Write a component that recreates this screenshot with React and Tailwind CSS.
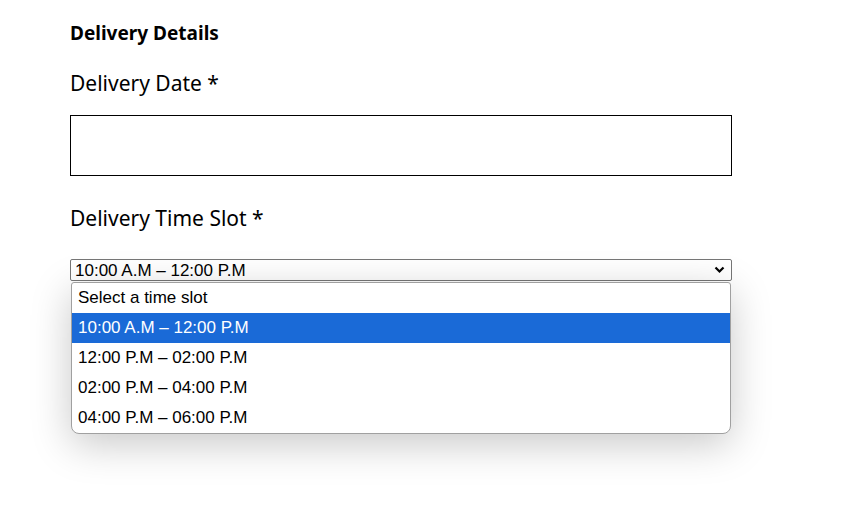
import React from 'react';

const slots = [
  'Select a time slot',
  '10:00 A.M – 12:00 P.M',
  '12:00 P.M – 02:00 P.M',
  '02:00 P.M – 04:00 P.M',
  '04:00 P.M – 06:00 P.M',
];

const App = () => {
  const selected = 1;
  return (
    <div className="min-h-[511px] bg-white pl-[70px] pt-[22px] text-black" style={{ fontFamily: '"Noto Sans", "Open Sans", sans-serif' }}>
      <div className="w-[662px]">
        <h3 className="text-[19px] font-bold leading-[22px]">Delivery Details</h3>
        <label className="mt-[25px] block text-[21px] leading-[28px]">Delivery Date *</label>
        <div className="mt-[18px] h-[61px] border border-black"></div>
        <label className="mt-[28px] block text-[21px] leading-[28px]">Delivery Time Slot *</label>
        <div className="relative mt-[27px]">
          <div className="flex h-[22px] items-center justify-between rounded-[2px] border border-[#767676] pl-[4px] pr-[6px] text-[17px] leading-none" style={{ fontFamily: '"Liberation Sans", Arial, sans-serif' }}>
            <span>{slots[selected]}</span>
            <svg width="11" height="8" viewBox="0 0 11 8" fill="none">
              <path d="M1.5 1.5 L5.5 5.5 L9.5 1.5" stroke="#000" strokeWidth="2.2" />
            </svg>
          </div>
          <div className="absolute left-[1px] right-[1px] top-[23px] overflow-hidden rounded-b-[8px] rounded-t-[3px] border border-[#a0a0a0] bg-white shadow-[0_10px_40px_rgba(0,0,0,0.22)]" style={{ fontFamily: '"Liberation Sans", Arial, sans-serif' }}>
            {slots.map((s, i) => (
              <div key={s} className={`flex h-[30px] items-center px-[6px] text-[17px] ${i === selected ? 'bg-[#1a6ad7] text-white' : 'text-black'}`}>
                {s}
              </div>
            ))}
          </div>
        </div>
      </div>
    </div>
  );
};

export default App;
